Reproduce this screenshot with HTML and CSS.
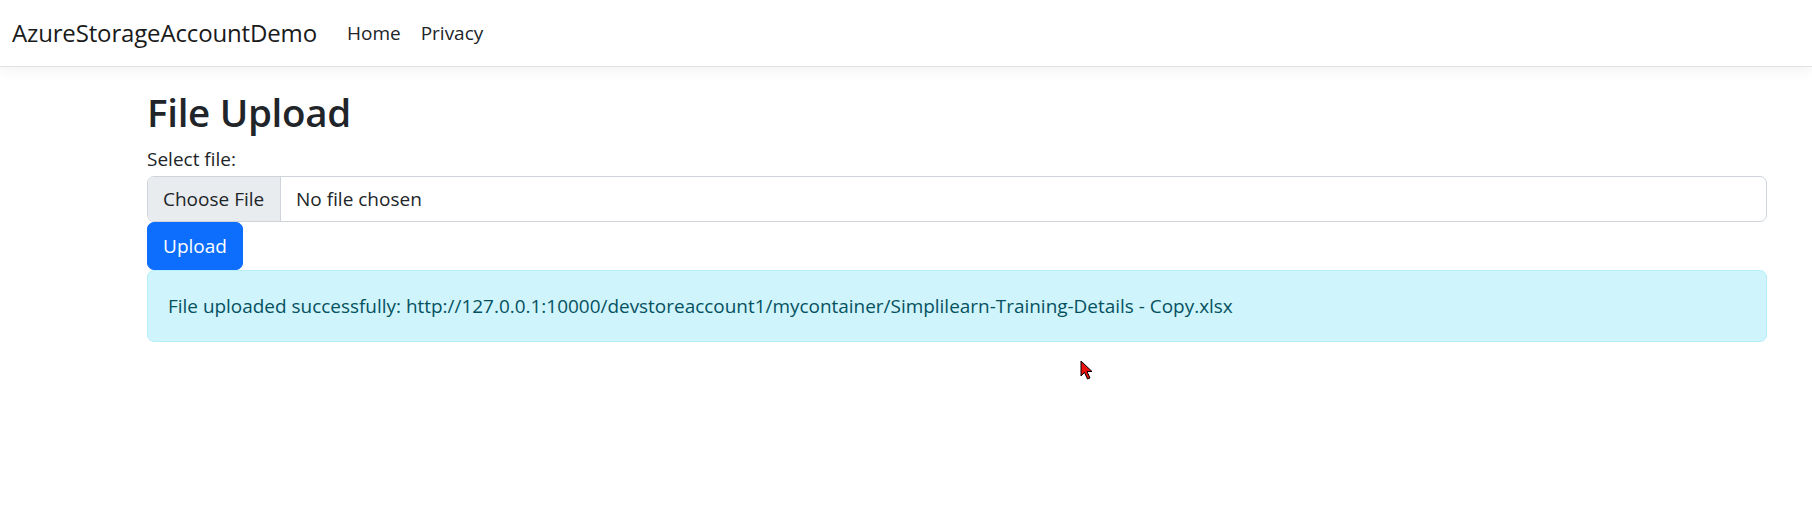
FILE: index.html
```html
<!DOCTYPE html>
<html lang="en">
<head>
<meta charset="utf-8">
<title>AzureStorageAccountDemo</title>
<link rel="stylesheet" href="styles.css">
</head>
<body>
<header class="navbar">
  <a class="brand" href="#">AzureStorageAccountDemo</a>
  <nav class="nav">
    <a class="nav-link" href="#">Home</a>
    <a class="nav-link" href="#">Privacy</a>
  </nav>
</header>
<main class="container">
  <h1 class="title">File Upload</h1>
  <form class="upload-form">
    <label class="form-label">Select file:</label>
    <div class="file-input">
      <span class="file-btn">Choose File</span>
      <span class="file-name">No file chosen</span>
    </div>
    <button type="button" class="btn-primary">Upload</button>
  </form>
  <div class="alert">File uploaded successfully: http://127.0.0.1:10000/devstoreaccount1/mycontainer/Simplilearn-Training-Details - Copy.xlsx</div>
</main>
<svg class="cursor" width="16" height="22" viewBox="0 0 16 22">
  <path d="M1 1 L1 16 L4.5 12.5 L7.5 19 L10 18 L7 11.5 L12 11.5 Z" fill="#e8120c" stroke="#000" stroke-width="1"/>
</svg>
</body>
</html>
```

FILE: styles.css
```css
* { box-sizing: border-box; }
html, body { margin: 0; padding: 0; }
body {
  font-family: "Open Sans", "Noto Sans", sans-serif;
  color: #212529;
  background: #fff;
  width: 1812px;
  height: 526px;
  overflow: hidden;
  position: relative;
}
a { text-decoration: none; color: #212529; }

.navbar {
  height: 67px;
  display: flex;
  align-items: center;
  padding: 0 0 1px 12px;
  border-bottom: 1px solid #dee2e6;
  box-shadow: 0 4px 12px rgba(0,0,0,0.05);
  background: #fff;
}
.brand {
  font-size: 24px;
  color: #1a1a1a;
  margin-right: 30px;
  letter-spacing: -0.15px;
}
.nav { display: flex; gap: 20px; }
.nav-link { font-size: 19px; color: #212529; }

.container {
  width: 1620px;
  margin-left: 147px;
}
.title {
  margin: 23px 0 10px 0;
  font-size: 38.5px;
  font-weight: 600;
  line-height: 44px;
  letter-spacing: -0.3px;
}
.upload-form { display: flex; flex-direction: column; align-items: flex-start; }
.form-label {
  font-size: 19px;
  line-height: 30px;
  margin-bottom: 2px;
}
.file-input {
  width: 100%;
  height: 46px;
  display: flex;
  align-items: stretch;
  border: 1px solid #ced4da;
  border-radius: 7px;
  overflow: hidden;
  font-size: 19px;
}
.file-btn {
  display: flex;
  align-items: center;
  padding: 0 14px 0 15px;
  width: 133px;
  background: #e9ecef;
  border-right: 1px solid #ced4da;
  color: #212529;
  white-space: nowrap;
}
.file-name {
  display: flex;
  align-items: center;
  padding-left: 15px;
  color: #212529;
}
.btn-primary {
  width: 96px;
  height: 48px;
  background: #0d6efd;
  color: #fff;
  border: 1px solid #0d6efd;
  border-radius: 7px;
  font-family: inherit;
  font-size: 19px;
  padding: 0;
  text-align: center;
}
.alert {
  height: 72px;
  display: flex;
  align-items: center;
  padding: 0 20px;
  background: #cff4fc;
  border: 1px solid #b6effb;
  border-radius: 7px;
  color: #055160;
  font-size: 18.95px;
  white-space: nowrap;
}
.cursor {
  position: absolute;
  left: 1080px;
  top: 360px;
}
```
